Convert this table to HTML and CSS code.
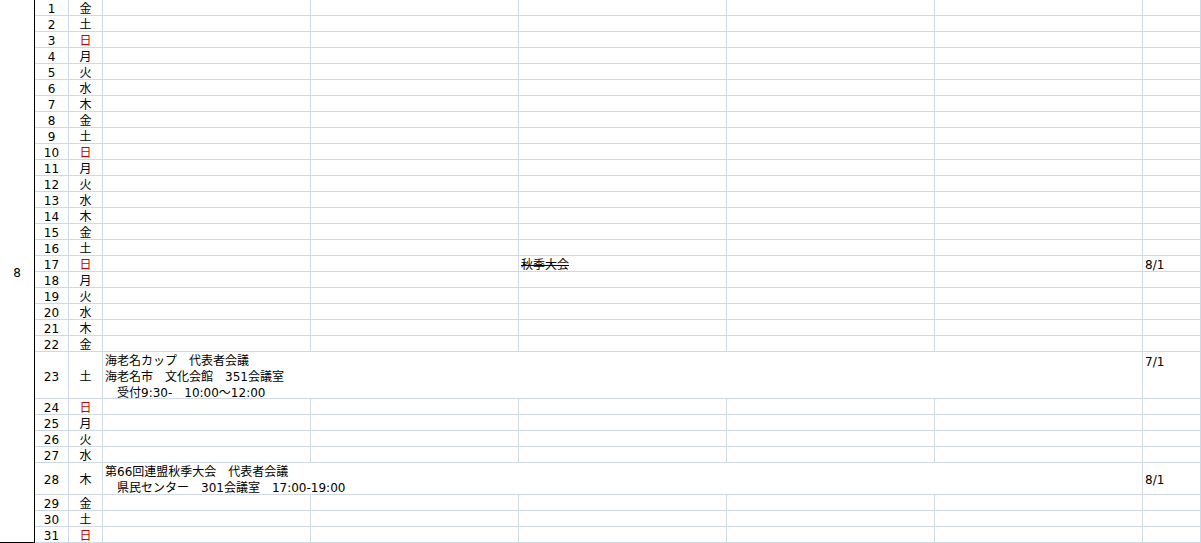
FILE: index.html
```html
<!DOCTYPE html>
<html lang="ja">
<head>
    <meta charset="UTF-8">
    <meta name="viewport" content="width=device-width, initial-scale=1.0">
    <title>8月 行事予定</title>
    <link rel="stylesheet" href="styles.css">
</head>
<body>
    <div class="sheet" id="sheet">
        <div class="cell month">8</div>
    </div>
    <script>
        const dow = ['金', '土', '日', '月', '火', '水', '木'];

        // col = which of the five wide columns holds the text (0-4)
        const events = {
            17: { col: 2, lines: ['秋季大会'], strike: true, note: '8/1' },
            23: { span: true, lines: ['海老名カップ　代表者会議', '海老名市　文化会館　351会議室', '　受付9:30-　10:00～12:00'], note: '7/1', noteTop: true },
            28: { span: true, lines: ['第66回連盟秋季大会　代表者会議', '　県民センター　301会議室　17:00-19:00'], note: '8/1' }
        };

        function cell(cls, text) {
            const div = document.createElement('div');
            div.className = 'cell ' + cls;
            if (text) div.innerHTML = text;
            return div;
        }

        const sheet = document.getElementById('sheet');
        for (let d = 1; d <= 31; d++) {
            const day = dow[(d - 1) % 7];
            const ev = events[d] || {};
            sheet.appendChild(cell('num', String(d)));
            sheet.appendChild(cell(day === '日' ? 'dow sun' : 'dow', day));

            if (ev.span) {
                sheet.appendChild(cell('wide merged', ev.lines.join('<br>')));
            } else {
                for (let c = 0; c < 5; c++) {
                    let text = '';
                    if (ev.lines && ev.col === c) {
                        text = ev.strike ? '<s>' + ev.lines[0] + '</s>' : ev.lines[0];
                    }
                    sheet.appendChild(cell('wide', text));
                }
            }
            sheet.appendChild(cell(ev.noteTop ? 'note top' : 'note', ev.note || ''));
        }
    </script>
</body>
</html>
```

FILE: styles.css
```css
body {
    margin: 0;
    background: #fff;
    font-family: "DejaVu Sans", "Noto Sans CJK JP", sans-serif;
    font-size: 12px;
    color: #000;
}
.sheet {
    display: grid;
    grid-template-columns: 35px 34px 34px repeat(5, 208px) 58px;
    grid-template-rows: repeat(22, 16px) 47px repeat(4, 16px) 32px repeat(3, 16px);
    width: 1201px;
}
.cell {
    box-sizing: border-box;
    border-right: 1px solid #d0d7e5;
    border-bottom: 1px solid #d0d7e5;
    padding: 2px 2px 0;
    line-height: 15px;
    white-space: nowrap;
    overflow: visible;
}
.month {
    grid-row: 1 / -1;
    border-right-color: #000;
    border-bottom-color: #000;
    display: flex;
    align-items: center;
    justify-content: center;
    padding-top: 4px;
}
.num,
.dow {
    display: flex;
    align-items: center;
    justify-content: center;
    padding: 4px 0 0;
}
.sun {
    color: #c80000;
}
.merged {
    grid-column: span 5;
    line-height: 16px;
    padding-top: 1px;
}
.note {
    display: flex;
    align-items: center;
    padding-top: 4px;
}
.note.top {
    align-items: flex-start;
    padding-top: 3px;
}
s {
    text-decoration-thickness: 1px;
}
```
